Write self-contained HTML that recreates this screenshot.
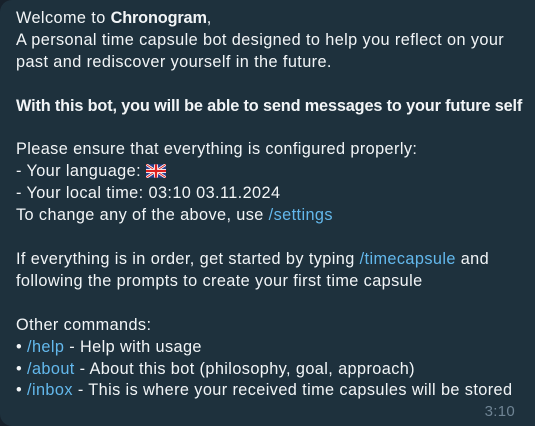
<!DOCTYPE html>
<html><head><meta charset="utf-8"><style>
html,body{margin:0;padding:0;width:535px;height:426px;overflow:hidden;background:#17212b;}
.b{position:absolute;left:0;top:0;width:535px;height:426px;background:#1e313d;border-radius:12px 0 0 12px;box-sizing:border-box;padding:8px 0 0 16px;color:#f2f5f7;font-family:"Liberation Sans",sans-serif;font-size:16.3px;line-height:21.9px;white-space:nowrap;letter-spacing:0.4px;}
a{color:#63b8ec;text-decoration:none}
b{font-weight:bold;letter-spacing:-0.15px}
.t{position:absolute;right:20px;bottom:3px;color:#6f8494;font-size:15px;letter-spacing:0.3px}
.fl{display:inline-block;vertical-align:-2px;}
</style></head><body><div class="b">
Welcome to <b>Chronogram</b>,<br>
A personal time capsule bot designed to help you reflect on your<br>
past and rediscover yourself in the future.<br><br>
<b>With this bot, you will be able to send messages to your future self</b><br><br>
Please ensure that everything is configured properly:<br>
- Your language: <svg class="fl" width="20" height="14" viewBox="0 0 60 40"><rect width="60" height="40" fill="#2a3f8f"/><path d="M0,0L60,40M60,0L0,40" stroke="#fff" stroke-width="8"/><path d="M0,0L60,40M60,0L0,40" stroke="#d22" stroke-width="3"/><path d="M30,0V40M0,20H60" stroke="#fff" stroke-width="12"/><path d="M30,0V40M0,20H60" stroke="#d22" stroke-width="7"/></svg><br>
- Your local time: 03:10 03.11.2024<br>
To change any of the above, use <a>/settings</a><br><br>
If everything is in order, get started by typing <a>/timecapsule</a> and<br>
following the prompts to create your first time capsule<br><br>
Other commands:<br>
• <a>/help</a> - Help with usage<br>
• <a>/about</a> - About this bot (philosophy, goal, approach)<br>
• <a>/inbox</a> - This is where your received time capsules will be stored
<div class="t">3:10</div>
</div></body></html>
